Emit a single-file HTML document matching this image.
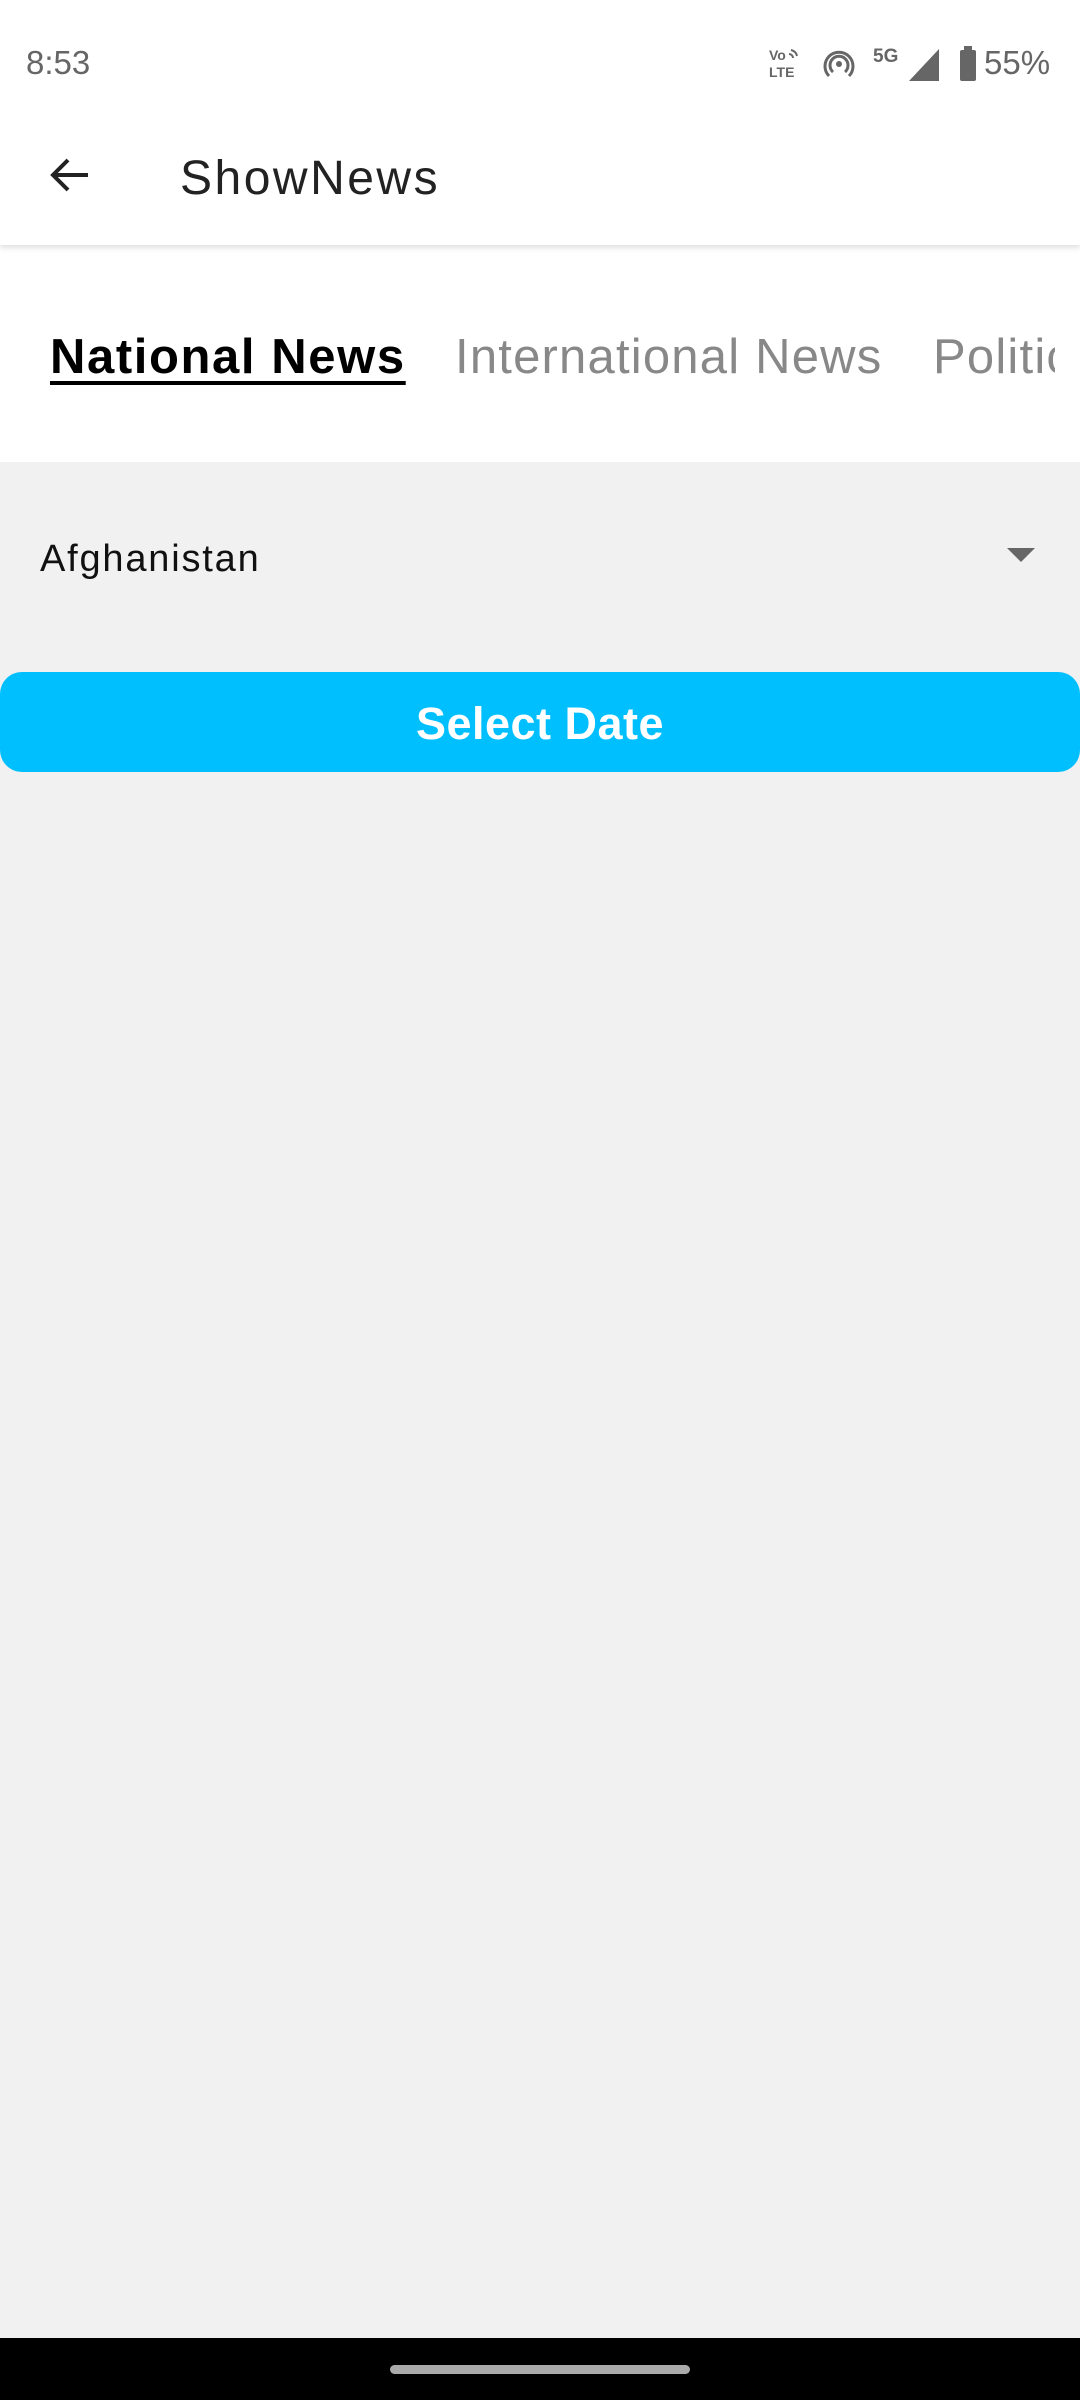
<!DOCTYPE html>
<html><head><meta charset="utf-8"><style>
*{margin:0;padding:0;box-sizing:border-box}
body{width:1080px;height:2400px;background:#f1f1f1;font-family:"Liberation Sans",sans-serif;position:relative;overflow:hidden}
.top{position:absolute;left:0;top:0;width:1080px;height:462px;background:#fff}
.status{position:absolute;top:44px;font-size:33px;color:#666}
.hdr{position:absolute;top:0;left:0;width:1080px;height:245px;background:#fff;box-shadow:0 3px 5px rgba(0,0,0,0.12)}
.title{position:absolute;left:180px;top:151px;font-size:48px;color:#222;letter-spacing:2.5px}
.tab{position:absolute;top:329px;font-size:49px;white-space:nowrap}
.nav{position:absolute;left:0;top:2338px;width:1080px;height:62px;background:#000}
.handle{position:absolute;left:390px;top:2365px;width:300px;height:9px;border-radius:5px;background:#aaa}
</style></head><body>
<div class="top"></div>
<div class="hdr">
<div class="status" style="left:26px">8:53</div>
<div class="status" style="left:984px">55%</div>
<svg style="position:absolute;left:765px;top:44px" width="290" height="40" viewBox="0 0 290 40">
<text x="4" y="16" font-size="14" font-weight="bold" fill="#666" font-family="Liberation Sans">Vo</text>
<text x="4" y="33" font-size="14" font-weight="bold" fill="#666" font-family="Liberation Sans">LTE</text>
<path d="M26 6a8 8 0 0 1 6 6M24 10a4 4 0 0 1 4 4" stroke="#666" stroke-width="2" fill="none"/>
<circle cx="74" cy="20" r="3" fill="#666"/>
<path d="M68 28a9 9 0 1 1 12 0M64 32a14 14 0 1 1 20 0" stroke="#666" stroke-width="3" fill="none"/>
<text x="108" y="18" font-size="19" font-weight="bold" fill="#666" font-family="Liberation Sans">5G</text>
<path d="M144 37L174 37L174 5Z" fill="#666"/>
<rect x="195" y="6" width="16" height="31" rx="2" fill="#666"/>
<rect x="199" y="2" width="8" height="5" fill="#666"/>
</svg>
<svg style="position:absolute;left:48px;top:155px" width="44" height="40" viewBox="0 0 44 40"><path d="M40 20H6M20 5L5 20L20 35" stroke="#222" stroke-width="4" fill="none"/></svg>
<div class="title">ShowNews</div>
</div>
<div class="tab" style="left:50px;font-weight:bold;color:#000;letter-spacing:1.6px;text-decoration:underline;text-underline-offset:8px;text-decoration-thickness:4px">National News</div>
<div class="tab" style="left:455px;color:#888;letter-spacing:1.2px">International News</div>
<div style="position:absolute;left:933px;top:329px;width:122px;overflow:hidden" class="tab"><span style="color:#888;letter-spacing:1.2px">Politics</span></div>
<div style="position:absolute;left:40px;top:538px;font-size:38px;color:#111;letter-spacing:1.8px">Afghanistan</div>
<svg style="position:absolute;left:1007px;top:548px" width="28" height="16"><path d="M0 0H28L14 14Z" fill="#666"/></svg>
<div style="position:absolute;left:0;top:672px;width:1080px;height:100px;background:#00bfff;border-radius:22px;color:#fff;font-weight:bold;font-size:45px;text-align:center;line-height:104px;letter-spacing:0.5px">Select Date</div>
<div class="nav"></div><div class="handle"></div>
</body></html>
